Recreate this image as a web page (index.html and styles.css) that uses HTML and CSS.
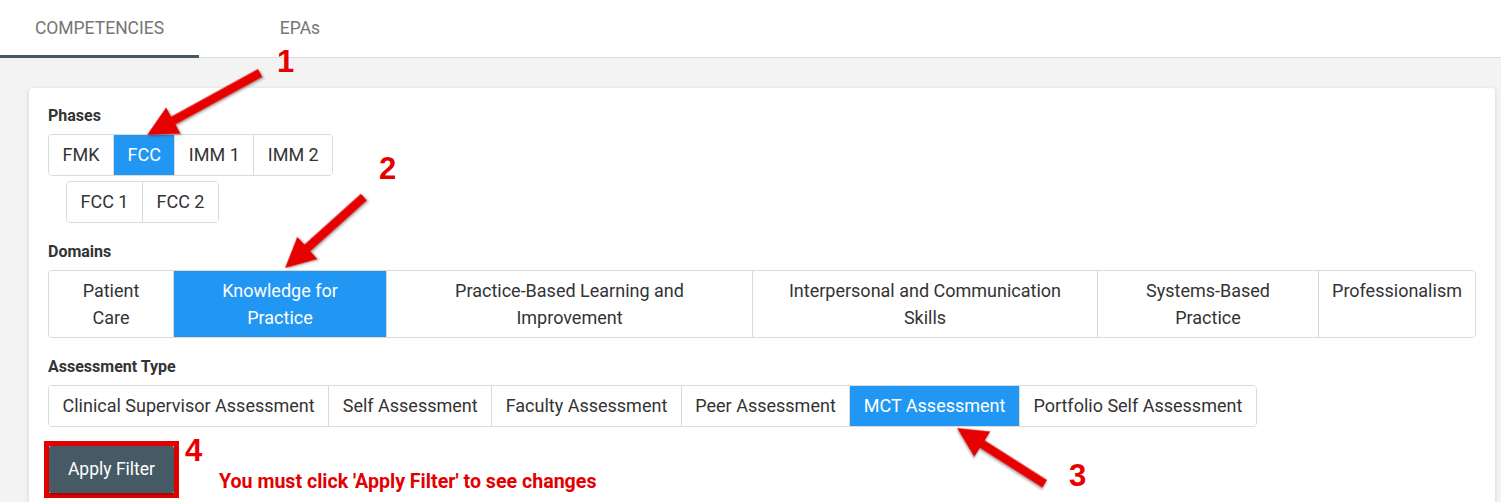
FILE: index.html
```html
<!DOCTYPE html>
<html lang="en">
<head>
<meta charset="utf-8">
<title>Filters</title>
<link rel="stylesheet" href="styles.css">
</head>
<body>
<div class="page">
  <nav class="tabs">
    <div class="tab active">COMPETENCIES</div>
    <div class="tab">EPAs</div>
  </nav>
  <main class="content">
    <section class="card">
      <div class="field">
        <div class="label">Phases</div>
        <div class="group">
          <div class="btn">FMK</div>
          <div class="btn selected">FCC</div>
          <div class="btn">IMM 1</div>
          <div class="btn">IMM 2</div>
        </div>
        <div class="group sub">
          <div class="btn">FCC 1</div>
          <div class="btn">FCC 2</div>
        </div>
      </div>
      <div class="field">
        <div class="label">Domains</div>
        <div class="group domains">
          <div class="btn">Patient<br>Care</div>
          <div class="btn selected">Knowledge for<br>Practice</div>
          <div class="btn">Practice-Based Learning and<br>Improvement</div>
          <div class="btn">Interpersonal and Communication<br>Skills</div>
          <div class="btn">Systems-Based<br>Practice</div>
          <div class="btn">Professionalism</div>
        </div>
      </div>
      <div class="field">
        <div class="label">Assessment Type</div>
        <div class="group">
          <div class="btn">Clinical Supervisor Assessment</div>
          <div class="btn">Self Assessment</div>
          <div class="btn">Faculty Assessment</div>
          <div class="btn">Peer Assessment</div>
          <div class="btn selected">MCT Assessment</div>
          <div class="btn">Portfolio Self Assessment</div>
        </div>
      </div>
      <div class="actions">
        <div class="highlight"><button class="apply">Apply Filter</button></div>
        <div class="notice">You must click 'Apply Filter' to see changes</div>
      </div>
    </section>
  </main>

  <div class="annotations">
    <svg class="arrows" width="1501" height="502" viewBox="0 0 1501 502">
      <g class="arrow" transform="translate(147 135) rotate(-28.75)">
        <polygon points="0,0 30,-15 30,-4.5 129,-4.5 129,4.5 30,4.5 30,15"/>
      </g>
      <g class="arrow" transform="translate(285 268) rotate(-41.95)">
        <polygon points="0,0 30,-15 30,-4.5 106,-4.5 106,4.5 30,4.5 30,15"/>
      </g>
      <g class="arrow" transform="translate(957 428) rotate(32.47)">
        <polygon points="0,0 30,-15 30,-4.5 104,-4.5 104,4.5 30,4.5 30,15"/>
      </g>
    </svg>
    <span class="num n1">1</span>
    <span class="num n2">2</span>
    <span class="num n3">3</span>
    <span class="num n4">4</span>
  </div>
</div>
</body>
</html>
```

FILE: styles.css
```css
* { box-sizing: border-box; }

html, body {
  margin: 0;
  padding: 0;
}

body {
  font-family: Roboto, "Noto Sans", sans-serif;
  color: #333;
  background: #f3f3f3;
  width: 1501px;
  height: 502px;
  overflow: hidden;
}

.page {
  position: relative;
  height: 502px;
  overflow: hidden;
}

.tabs {
  display: flex;
  height: 58px;
  background: #fff;
  border-bottom: 1px solid #dcdcdc;
}

.tab {
  width: 200px;
  display: flex;
  align-items: center;
  justify-content: center;
  font-size: 17.5px;
  color: #757575;
  padding-bottom: 2px;
}

.tab.active {
  width: 199px;
  border-bottom: 3px solid #455a64;
  margin-bottom: -1px;
  padding-bottom: 0;
}

.tab + .tab {
  margin-left: 1px;
}

.content {
  padding: 30px 6px 0 29px;
}

.card {
  background: #fff;
  border-radius: 4px;
  box-shadow: 0 1px 4px rgba(0, 0, 0, 0.14);
  padding: 18px 19px 10px 19px;
}

.field + .field {
  margin-top: 19px;
}

.label {
  font-size: 16px;
  font-weight: 700;
  line-height: 20px;
  color: #333;
  margin-bottom: 8px;
}

.group {
  display: inline-flex;
  border: 1px solid #dadada;
  border-radius: 4px;
  overflow: hidden;
  vertical-align: top;
}

.group.sub {
  display: flex;
  width: max-content;
  margin: 5px 0 0 18px;
}

.btn {
  font-size: 18px;
  line-height: 24px;
  padding: 8px 13.5px;
  color: #333;
  background: #fff;
  white-space: nowrap;
  text-align: center;
}

.btn + .btn {
  border-left: 1px solid #dadada;
}

.btn.selected {
  background: #2196f3;
  color: #fff;
}

.group.domains {
  display: grid;
  grid-template-columns: 124px 213px 366px 345px 221px 157px;
}

.group.domains .btn {
  line-height: 27px;
  padding: 6px 4px;
  white-space: normal;
}

.actions {
  display: flex;
  align-items: flex-start;
  margin-top: 14px;
  margin-left: -4px;
}

.highlight {
  border: 5px solid #e30000;
  padding: 0;
}

.apply {
  display: block;
  width: 125px;
  height: 47px;
  border: none;
  border-radius: 2px;
  background: #455a64;
  color: #fff;
  font-family: Roboto, "Noto Sans", sans-serif;
  font-size: 17.5px;
  padding: 0 0 2px 0;
  box-shadow: 0 2px 2px rgba(0, 0, 0, 0.25);
  cursor: pointer;
}

.notice {
  margin: 30px 0 0 40px;
  font-family: Roboto, "Noto Sans", sans-serif;
  font-weight: 700;
  font-size: 19.6px;
  line-height: 22px;
  color: #e30000;
}

.annotations {
  position: absolute;
  inset: 0;
  pointer-events: none;
}

.arrows {
  position: absolute;
  top: 0;
  left: 0;
}

.arrow polygon {
  fill: #e60000;
  filter: drop-shadow(1px 2px 1px rgba(0, 0, 0, 0.3));
}

.num {
  position: absolute;
  font-family: "Liberation Sans", Arial, sans-serif;
  font-weight: 700;
  font-size: 31px;
  line-height: 32px;
  color: #e60000;
}

.n1 { left: 277px; top: 46px; }
.n2 { left: 379px; top: 153px; }
.n3 { left: 1069px; top: 460px; }
.n4 { left: 185px; top: 435px; }
```
